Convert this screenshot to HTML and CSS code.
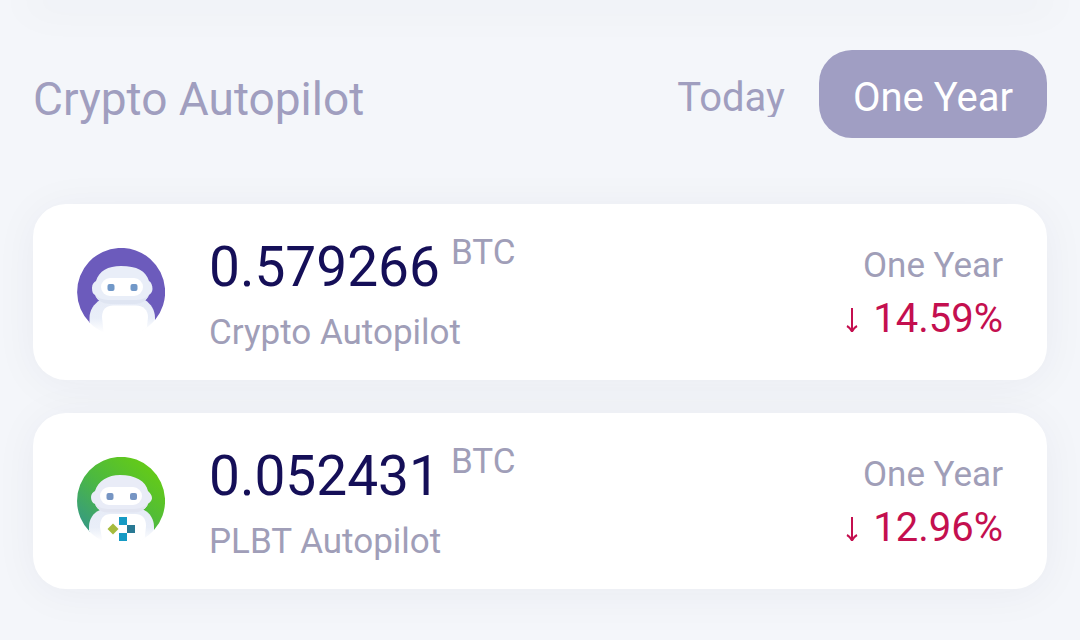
FILE: index.html
```html
<!DOCTYPE html>
<html lang="en">
<head>
<meta charset="utf-8">
<meta name="viewport" content="width=device-width, initial-scale=1">
<title>Crypto Autopilot</title>
<link rel="stylesheet" href="styles.css">
</head>
<body>
<div class="previous-card"></div>
<main class="panel">
  <header class="panel-header">
    <h1 class="title">Crypto Autopilot</h1>
    <div class="periods">
      <button type="button" class="period"><span class="period-label">Today</span></button>
      <button type="button" class="period period-active" aria-pressed="true">One Year</button>
    </div>
  </header>
  <section class="cards">
    <article class="card">
      <svg class="avatar" viewBox="0 0 88 88" aria-hidden="true">
        <defs>
          <clipPath id="disc"><circle cx="44" cy="44" r="44"/></clipPath>
          <linearGradient id="shell" x1="0" y1="0" x2="0" y2="1">
            <stop offset="0" stop-color="#e7ecf7"/><stop offset=".5" stop-color="#e9eef8"/><stop offset=".9" stop-color="#fff"/>
          </linearGradient>
        </defs>
        <path d="M13 75A44 44 0 1 1 78 72L60 50H30Z" fill="#6c5bbc"/>
        <g clip-path="url(#disc)">
          <path d="M23 52C17 56 12.500 62 12.500 70V88H78V70C78 62 74 56 68 52Z" fill="url(#shell)"/>
          <path d="M27 88L25 69C25 61 30 57.500 36 57.500H59C66 57.500 71 62 71 69L69 88Z" fill="#fff"/>
        </g>
        <path d="M44 18C60 18 69 23 72 33C74 34 75.500 37 75.500 41C75.500 44 73.500 46 72 47C69 53 64 56 58 56H33C26 56 21 53 18 47C16 46 15 44 15 40C15 36 17 34 19 33C22 23 31 18 44 18Z" fill="#e9eef8"/>
        <path d="M18 47C20 53 27 56 33 56H58C65 56 70 52 72 47C68 51 63 52 57 52H34C26 52 21 50 18 47Z" fill="#dfe5f2"/>
        <rect x="24" y="30" width="42" height="18" rx="9" fill="#fff"/>
        <rect x="30.500" y="36" width="7" height="7" rx="2" fill="#7198c8"/>
        <rect x="53.500" y="36" width="7" height="7" rx="2" fill="#7198c8"/>
      </svg>
      <div class="holding">
        <p class="amount">0.579266 <span class="currency">BTC</span></p>
        <h2 class="name">Crypto Autopilot</h2>
      </div>
      <div class="result">
        <p class="result-period">One Year</p>
        <p class="change"><svg class="arrow" viewBox="0 0 12 24" aria-label="down"><path d="M6 0V23M1 18Q4 19.500 6 23.500Q8 19.500 11 18"/></svg>14.59%</p>
      </div>
    </article>
    <article class="card">
      <svg class="avatar" viewBox="0 0 88 88" aria-hidden="true">
        <defs>
          <linearGradient id="green" x1="0" y1=".85" x2=".75" y2=".12">
            <stop offset="0" stop-color="#379b80"/><stop offset=".5" stop-color="#4cb841"/><stop offset="1" stop-color="#62c91b"/>
          </linearGradient>
        </defs>
        <path d="M13 75A44 44 0 1 1 77 73L60 50H30Z" fill="url(#green)"/>
        <g clip-path="url(#disc)">
          <path d="M23 53C16 56 12 62 12 70V88H77V70C77 62 73 56 67 53Z" fill="url(#shell)"/>
          <path d="M26 88L23 70C23 61 27 57 34 57H58C65 57 69 61 69 69L67 88Z" fill="#fff"/>
        </g>
        <path d="M43 18C58 18 69 24 71 34C73 36 75 38 75 41C75 44 72 46 71 47C69 52 64 55.500 57 55.500H31C24 55.500 20 52 18 47C15 46 14 43 14 40C14 37 16 35 18 34C21 24 31 18 43 18Z" fill="#e9ecf7"/>
        <path d="M18 47C20 52 24 55.500 31 55.500H57C64 55.500 69 52 71 47C66 51 61 52 56 52H33C27 52 22 51 18 47Z" fill="#e2e5f1"/>
        <rect x="23" y="30" width="42" height="18" rx="9" fill="#fff"/>
        <rect x="29.500" y="36" width="7" height="7" rx="2" fill="#7695c3"/>
        <rect x="53" y="36" width="7" height="7" rx="2" fill="#7695c3"/>
        <path d="M42 60h8v8h-8zM42 76h8v8h-8z" fill="#169ac4"/>
        <path d="M50 68h8v8h-8z" fill="#297994"/>
        <path d="M36 66.500L41.500 72L36 77.500L30.500 72Z" fill="#a6bb3d"/>
      </svg>
      <div class="holding">
        <p class="amount">0.052431 <span class="currency">BTC</span></p>
        <h2 class="name">PLBT Autopilot</h2>
      </div>
      <div class="result">
        <p class="result-period">One Year</p>
        <p class="change"><svg class="arrow" viewBox="0 0 12 24" aria-label="down"><path d="M6 0V23M1 18Q4 19.500 6 23.500Q8 19.500 11 18"/></svg>12.96%</p>
      </div>
    </article>
  </section>
</main>
</body>
</html>
```

FILE: styles.css
```css
* { box-sizing: border-box; }
body {
  margin: 0;
  background: #f4f6fa;
  color: #a09ebf;
  font-family: Roboto, "Liberation Sans", sans-serif;
  font-size: 35px;
  font-weight: 400;
}
h1, h2, p { margin: 0; font-weight: 400; }
.previous-card {
  height: 0;
  margin: 0 33px;
  box-shadow: 0 0 44px 8px rgba(40, 40, 80, .05);
}
.panel { padding: 50px 33px; }
.panel-header {
  display: flex;
  justify-content: space-between;
  align-items: center;
  margin-bottom: 66px;
}
.title { padding-top: 10px; font-size: 46px; line-height: 54px; }
.periods { display: flex; }
.period {
  border: 0;
  border-radius: 33px;
  padding: 7px 34px 0;
  height: 88px;
  background: none;
  color: inherit;
  font: 40px/48px Roboto, "Liberation Sans", sans-serif;
}
.period-active { background: #a09ec3; color: #fff; }
.period-label { display: block; overflow: hidden; line-height: 38px; }
.cards { display: grid; gap: 33px; }
.card {
  display: flex;
  align-items: center;
  padding: 28px 44px 24px;
  min-height: 176px;
  border-radius: 33px;
  background: #fff;
  box-shadow: 0 4px 44px rgba(40, 40, 80, .05);
}
.avatar { width: 88px; height: 88px; margin-right: 44px; flex: none; align-self: flex-start; margin-top: 16px; }
.holding { flex: 1; }
.amount {
  display: flex;
  gap: 11px;
  color: #150f58;
  font-size: 55px;
  line-height: 66px;
}
.currency { color: #a09eb8; font-size: 35px; line-height: 38px; }
.name { margin-top: 12px; font-size: 35px; line-height: 42px; color: #a09eb8; }
.result { text-align: right; }
.result-period { line-height: 42px; color: #a09eb8; }
.change {
  margin-top: 8px;
  color: #c40f4f;
  font-size: 40px;
  line-height: 48px;
}
.arrow {
  width: 12px;
  height: 24px;
  margin-right: 15px;
  fill: none;
  stroke: currentColor;
  stroke-width: 2;
}
```
